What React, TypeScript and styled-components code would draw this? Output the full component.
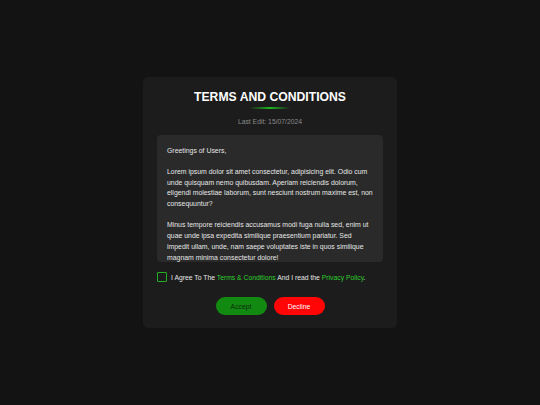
import React, { useState } from "react";
import styled, { createGlobalStyle } from "styled-components";

const GlobalStyle = createGlobalStyle`
    html, body {
        margin: 0;
        padding: 0;
        background: #131313;
        font-family: "Liberation Sans", Arial, sans-serif;
    }
`

const Page = styled.div`
    width: 540px;
    height: 405px;
    display: flex;
    align-items: center;
    justify-content: center;
`

const Card = styled.div`
    width: 254px;
    box-sizing: border-box;
    padding: 12px 14px 13px;
    background: #1c1c1c;
    border-radius: 5px;
    display: flex;
    flex-direction: column;
    align-items: center;
`

const Title = styled.h1`
    margin: 0;
    font-size: 12.2px;
    line-height: 16px;
    font-weight: bold;
    color: #ffffff;
`

const Underline = styled.div`
    width: 40px;
    height: 2px;
    margin-top: 2px;
    background: linear-gradient(90deg, rgba(20, 160, 20, 0), #1eb81e 50%, rgba(20, 160, 20, 0));
`

const LastEdit = styled.div`
    margin-top: 8px;
    font-size: 6.8px;
    line-height: 10px;
    color: #8a8a8a;
`

const ContentBox = styled.div`
    margin-top: 8px;
    width: 100%;
    height: 127px;
    box-sizing: border-box;
    padding: 10.5px 10px 0;
    background: #2a2a2a;
    border-radius: 4px;
    overflow: hidden;
    color: #e6e6e6;
    font-size: 6.9px;
    line-height: 10.7px;
`

const Para = styled.p`
    margin: 0 0 10.7px;
`

const AgreeRow = styled.label`
    margin-top: 10px;
    width: 100%;
    display: flex;
    align-items: center;
    gap: 4px;
    font-size: 6.8px;
    color: #e6e6e6;
    cursor: pointer;
`

const Check = styled.span<{ $on: boolean }>`
    width: 10px;
    height: 10px;
    box-sizing: border-box;
    border: 1px solid #22b022;
    border-radius: 1px;
    background: ${p => (p.$on ? "#22b022" : "transparent")};
    flex-shrink: 0;
`

const Link = styled.a`
    color: #2ecc2e;
    text-decoration: none;
`

const Buttons = styled.div`
    margin-top: 15px;
    display: flex;
    gap: 7px;
`

const Btn = styled.button<{ $kind: "accept" | "decline" }>`
    width: 51px;
    height: 18px;
    border: none;
    border-radius: 9px;
    padding: 0;
    font-family: inherit;
    font-size: 6.8px;
    cursor: pointer;
    background: ${p => (p.$kind === "accept" ? "#128a12" : "#ff0505")};
    color: ${p => (p.$kind === "accept" ? "#0c2a0c" : "#ffffff")};
`

export default function App() {
    const [agreed, setAgreed] = useState(false);

    return (
        <Page>
            <GlobalStyle />
            <Card>
                <Title>TERMS AND CONDITIONS</Title>
                <Underline />
                <LastEdit>Last Edit: 15/07/2024</LastEdit>
                <ContentBox>
                    <Para>Greetings of Users,</Para>
                    <Para>
                        Lorem ipsum dolor sit amet consectetur, adipisicing elit. Odio cum unde quisquam nemo quibusdam. Aperiam reiciendis dolorum, eligendi molestiae laborum, sunt nesciunt nostrum maxime est, non consequuntur?
                    </Para>
                    <Para>
                        Minus tempore reiciendis accusamus modi fuga nulla sed, enim ut quae unde ipsa expedita similique praesentium pariatur. Sed impedit ullam, unde, nam saepe voluptates iste in quos similique magnam minima consectetur dolore!
                    </Para>
                </ContentBox>
                <AgreeRow onClick={() => setAgreed(!agreed)}>
                    <Check $on={agreed} />
                    <span>
                        I Agree To The <Link href="#">Terms &amp; Conditions</Link> And I read the <Link href="#">Privacy Policy</Link>.
                    </span>
                </AgreeRow>
                <Buttons>
                    <Btn $kind="accept">Accept</Btn>
                    <Btn $kind="decline">Decline</Btn>
                </Buttons>
            </Card>
        </Page>
    )
}
